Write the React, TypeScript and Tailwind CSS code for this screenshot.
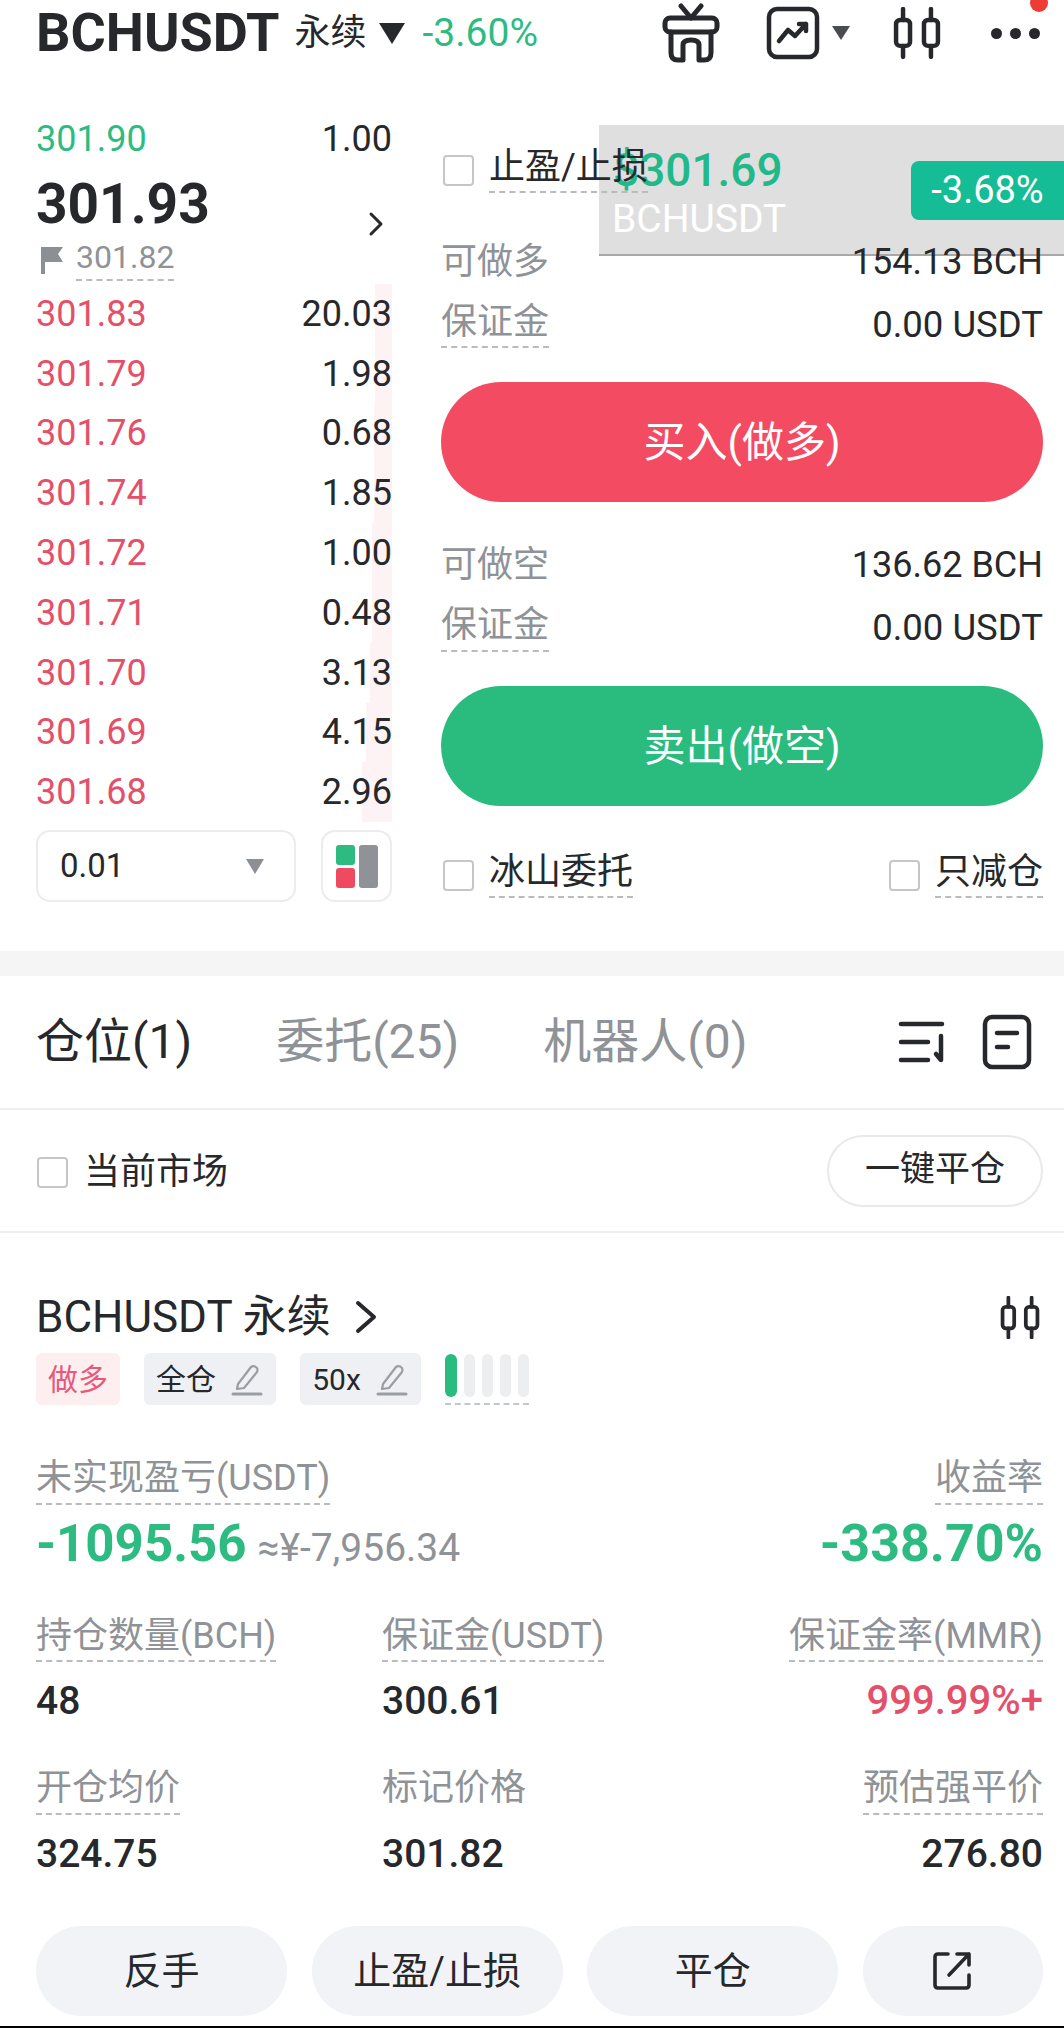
import React from "react";

const G = "text-[#2dbb82]";
const asks = [
  ["301.83", "20.03", 17],
  ["301.79", "1.98", 17],
  ["301.76", "0.68", 18],
  ["301.74", "1.85", 18],
  ["301.72", "1.00", 20],
  ["301.71", "0.48", 20],
  ["301.70", "3.13", 22],
  ["301.69", "4.15", 26],
  ["301.68", "2.96", 30],
] as const;

function Check() {
  return <span className="block w-[31px] h-[31px] rounded-[4px] border-2 border-[#c4c6c9] bg-white shrink-0" />;
}

function Dashed({ children, className = "" }: { children: React.ReactNode; className?: string }) {
  return <span className={"border-b-2 border-dashed border-[#b9bbbe] leading-[1.15] pb-[3px] " + className}>{children}</span>;
}

function Pen() {
  return (
    <svg width="34" height="34" viewBox="0 0 34 34" fill="none" stroke="#9a9da1" strokeWidth="2.2" strokeLinejoin="round" strokeLinecap="round">
      <path d="M8 22 L21 5 Q24 3 27 6 Q28 8 27 10 L14 26 L7 27 Z" />
      <path d="M3 32 H31" strokeWidth="3" />
    </svg>
  );
}

function Candle({ size = 48 }: { size?: number }) {
  return (
    <svg width={size} height={size * 1.08} viewBox="0 0 48 52" fill="none" stroke="#26282c" strokeWidth="4.5" strokeLinecap="round" strokeLinejoin="round">
      <rect x="3" y="13" width="14" height="26" rx="4" />
      <rect x="31" y="13" width="14" height="26" rx="4" />
      <path d="M10 2V13M10 39V50M38 2V13M38 39V50" />
    </svg>
  );
}

function Stat({ label, value, right = false, valueClass = "text-[#26282c]" }: { label: string; value: string; right?: boolean; valueClass?: string }) {
  return (
    <div className={"flex flex-col gap-[17px] " + (right ? "items-end" : "items-start")}>
      <Dashed className="text-[36px] text-[#8f9296]">{label}</Dashed>
      <span className={"leading-[44px] font-medium " + (right && value.includes("%") ? "text-[40px] " : "text-[39px] ") + valueClass}>{value}</span>
    </div>
  );
}

function Trade({ title, amount, color, btn, firstRow, secondRow }: { title: string; amount: string; color: string; btn: string; firstRow: string; secondRow: string }) {
  return (
    <div className="flex flex-col">
      <div className={"flex justify-between items-center " + firstRow}>
        <span className="text-[36px] text-[#8f9296]">{title}</span>
        <span className="text-[36px] text-[#26282c]">{amount}</span>
      </div>
      <div className={"flex justify-between items-center " + secondRow}>
        <Dashed className="text-[36px] text-[#8f9296]">保证金</Dashed>
        <span className="text-[36.5px] text-[#26282c]">0.00 USDT</span>
      </div>
      <div className={"mt-[26px] h-[120px] rounded-full flex items-center justify-center text-white text-[42px] font-normal " + color}>{btn}</div>
    </div>
  );
}

export default function App() {
  return (
    <div
      className="relative w-[1064px] h-[2028px] overflow-hidden bg-white flex flex-col text-[#26282c]"
      style={{ fontFamily: 'Roboto, "Noto Sans CJK SC", sans-serif' }}
    >
      {/* floating price ticker, painted under the order panel text */}
      <div className="absolute left-[599px] top-[125px] w-[465px] h-[131px] bg-[#dfdfdf] border-b-2 border-[#a8a8a8]">
        <span className="absolute left-[14px] top-[22px] text-[46px] font-medium leading-none text-[#22b98a]">$301.69</span>
        <span className="absolute left-[13px] top-[75px] text-[39px] leading-none text-white">BCHUSDT</span>
        <span className="absolute right-0 top-[36px] w-[153px] h-[59px] rounded-l-[8px] bg-[#14bd96] text-white text-[38px] flex items-center justify-center">-3.68%</span>
      </div>

      {/* header */}
      <header className="h-[66px] flex items-center pl-[36px] pr-[24px] shrink-0 relative">
        <span className="text-[54px] font-bold leading-none">BCHUSDT</span>
        <span className="ml-[15px] text-[36px] leading-none">永续</span>
        <svg className="ml-[12px]" width="26" height="24" viewBox="0 0 26 24"><path d="M0 2H26L13 23Z" fill="#26282c" /></svg>
        <span className={"ml-[18px] text-[39px] leading-none " + G}>-3.60%</span>
        <div className="ml-auto flex items-center">
          <svg width="58" height="60" viewBox="0 0 58 60" fill="none" stroke="#26282c" strokeWidth="5" strokeLinecap="round" strokeLinejoin="round">
            <rect x="3" y="15" width="52" height="14" rx="5" />
            <path d="M9 29V50Q9 57 16 57H21V42Q21 37 29 37Q37 37 37 42V57H42Q49 57 49 50V29" />
            <path d="M19 3L29 15L39 3" />
          </svg>
          <svg className="ml-[46px]" width="54" height="54" viewBox="0 0 54 54" fill="none" stroke="#26282c" strokeWidth="4.5" strokeLinecap="round" strokeLinejoin="round">
            <rect x="3" y="3" width="48" height="48" rx="8" />
            <path d="M13 35L22 24L29 30L40 18M33 18H40V25" />
          </svg>
          <svg className="ml-[12px]" width="18" height="16" viewBox="0 0 18 16"><path d="M0 1H18L9 15Z" fill="#4a4c50" /></svg>
          <div className="ml-[43px]"><Candle /></div>
          <div className="ml-[50px] flex gap-[8px] items-center">
            <span className="w-[11px] h-[11px] rounded-full bg-[#26282c]" />
            <span className="w-[11px] h-[11px] rounded-full bg-[#26282c]" />
            <span className="w-[11px] h-[11px] rounded-full bg-[#26282c]" />
          </div>
        </div>
        <span className="absolute right-[16px] top-[-6px] w-[18px] h-[18px] rounded-full bg-[#ee3b35]" />
      </header>

      {/* trading area */}
      <div className="relative flex pl-[36px] pr-[21px] pt-[43px] shrink-0">
        {/* order book */}
        <div className="w-[356px] flex flex-col">
          <div className="flex justify-between items-center h-[60px] text-[36px] leading-none">
            <span className={G}>301.90</span>
            <span>1.00</span>
          </div>
          <div className="flex justify-between h-[115px]">
            <div className="flex flex-col">
              <span className="text-[55px] font-bold leading-[70px]">301.93</span>
              <div className="flex items-center">
                <svg className="ml-[4px] mr-[12px]" width="24" height="28" viewBox="0 0 24 28"><path d="M1 1H23L18 8L23 16H5V28H1Z" fill="#8c8f93" /></svg>
                <Dashed className="text-[32px] text-[#8f9296]">301.82</Dashed>
              </div>
            </div>
            <svg className="mt-[42px] mr-[8px]" width="16" height="26" viewBox="0 0 16 26" fill="none" stroke="#26282c" strokeWidth="3" strokeLinecap="round" strokeLinejoin="round"><path d="M3 3L13 13L3 23" /></svg>
          </div>
          <div className="flex flex-col">
            {asks.map(([p, q, w]) => (
              <div key={p} className="relative flex justify-between items-center h-[59.8px] text-[36px] leading-none">
                <span className="absolute right-0 top-0 bottom-0 bg-[#fdf3f4]" style={{ width: w }} />
                <span className="relative text-[#e4506a]">{p}</span>
                <span className="relative">{q}</span>
              </div>
            ))}
          </div>
          <div className="flex justify-between mt-[8px]">
            <div className="w-[260px] h-[72px] rounded-[14px] border-2 border-[#ebecee] flex items-center justify-between pl-[22px] pr-[30px] text-[33px]">
              0.01
              <svg width="18" height="15" viewBox="0 0 18 15"><path d="M0 0H18L9 15Z" fill="#8c8f93" /></svg>
            </div>
            <div className="w-[71px] h-[72px] rounded-[14px] border-2 border-[#ebecee] flex items-center justify-center gap-[4px]">
              <div className="flex flex-col gap-[3px]">
                <span className="block w-[19px] h-[20px] rounded-[3px] bg-[#2dbb82]" />
                <span className="block w-[19px] h-[20px] rounded-[3px] bg-[#f04a60]" />
              </div>
              <span className="block w-[19px] h-[43px] rounded-[3px] bg-[#8f9296]" />
            </div>
          </div>
        </div>

        {/* order panel */}
        <div className="flex-1 ml-[49px] flex flex-col pt-[35px]">
          <div className="flex items-center gap-[15px] h-[52px] text-[36px] pl-[2px]">
            <Check />
            <Dashed>止盈/止损</Dashed>
          </div>
          <div className="mt-[34px]">
            <Trade title="可做多" amount="154.13 BCH" color="bg-[#f34c62]" btn="买入(做多)" firstRow="h-[64px]" secondRow="h-[62px]" />
          </div>
          <div className="mt-[31px]">
            <Trade title="可做空" amount="136.62 BCH" color="bg-[#2abb7f]" btn="卖出(做空)" firstRow="h-[64px]" secondRow="h-[63px]" />
          </div>
          <div className="mt-[46px] flex items-center justify-between text-[36px] pl-[2px]">
            <div className="flex items-center gap-[15px]"><Check /><Dashed>冰山委托</Dashed></div>
            <div className="flex items-center gap-[15px]"><Check /><Dashed>只减仓</Dashed></div>
          </div>
        </div>
      </div>

      <div className="h-[25px] bg-[#f5f5f6] mt-[49px] shrink-0" />

      {/* tabs */}
      <div className="h-[134px] flex items-center pl-[36px] pr-[32px] border-b-2 border-[#eeeff0] shrink-0">
        <span className="text-[48px] font-normal">仓位(1)</span>
        <span className="ml-[84px] text-[48px] font-normal text-[#8f9296]">委托(25)</span>
        <span className="ml-[84px] text-[48px] font-normal text-[#8f9296]">机器人(0)</span>
        <div className="ml-auto flex items-center gap-[32px]">
          <svg width="52" height="48" viewBox="0 0 52 48" fill="none" stroke="#26282c" strokeWidth="4.5" strokeLinecap="round" strokeLinejoin="round">
            <path d="M3 6H44M3 24H30M3 42H30M43 18V42L38 36" />
          </svg>
          <svg width="50" height="56" viewBox="0 0 50 56" fill="none" stroke="#26282c" strokeWidth="4.5" strokeLinecap="round" strokeLinejoin="round">
            <rect x="3" y="3" width="44" height="50" rx="7" />
            <path d="M15 19H35M15 33H26" />
          </svg>
        </div>
      </div>

      {/* current market */}
      <div className="h-[123px] flex items-center justify-between pl-[37px] pr-[21px] border-b-2 border-[#eeeff0] shrink-0">
        <div className="flex items-center gap-[16px] text-[36px] mt-[3px]">
          <Check />
          当前市场
        </div>
        <div className="w-[216px] h-[72px] rounded-full border-2 border-[#e8e9eb] flex items-center justify-center text-[35px]">一键平仓</div>
      </div>

      {/* position */}
      <div className="flex flex-col pl-[36px] pr-[21px] pt-[58px] flex-1">
        <div className="flex items-center justify-between h-[52px]">
          <div className="flex items-center">
            <span className="text-[44px]">BCHUSDT 永续</span>
            <svg className="ml-[24px]" width="22" height="34" viewBox="0 0 22 34" fill="none" stroke="#26282c" strokeWidth="4" strokeLinecap="round" strokeLinejoin="round"><path d="M3 3L19 17L3 31" /></svg>
          </div>
          <div className="mr-[3px]"><Candle size={40} /></div>
        </div>
        <div className="flex items-center mt-[10px] h-[52px]">
          <span className="w-[84px] h-[52px] rounded-[6px] bg-[#fdeef0] text-[#e8587a] text-[30px] flex items-center justify-center">做多</span>
          <span className="ml-[24px] w-[132px] h-[52px] rounded-[6px] bg-[#eef0f4] text-[30px] flex items-center justify-center gap-[14px]">全仓<Pen /></span>
          <span className="ml-[24px] w-[121px] h-[52px] rounded-[6px] bg-[#eef0f4] text-[30px] flex items-center justify-center gap-[14px]">50x<Pen /></span>
          <div className="ml-[24px] flex flex-col">
            <div className="flex gap-[7px]">
              <span className="block w-[12px] h-[43px] rounded-full bg-[#2abb7f]" />
              <span className="block w-[11px] h-[43px] rounded-full bg-[#eceef0]" />
              <span className="block w-[11px] h-[43px] rounded-full bg-[#eceef0]" />
              <span className="block w-[11px] h-[43px] rounded-full bg-[#eceef0]" />
              <span className="block w-[11px] h-[43px] rounded-full bg-[#eceef0]" />
            </div>
            <span className="block mt-[6px] border-b-2 border-dashed border-[#c4c6c9]" />
          </div>
        </div>

        <div className="flex justify-between mt-[53px]">
          <div className="flex flex-col items-start">
            <Dashed className="text-[36px] text-[#8f9296]">未实现盈亏(USDT)</Dashed>
            <div className="flex items-baseline mt-[8px]">
              <span className={"text-[51px] font-bold leading-[62px] " + G}>-1095.56</span>
              <span className="ml-[11px] text-[39px] text-[#8f9296]">≈¥-7,956.34</span>
            </div>
          </div>
          <div className="flex flex-col items-end">
            <Dashed className="text-[36px] text-[#8f9296]">收益率</Dashed>
            <span className={"text-[52px] font-bold leading-[62px] mt-[8px] " + G}>-338.70%</span>
          </div>
        </div>

        <div className="grid grid-cols-[346px_1fr_auto] gap-y-[45px] mt-[39px]">
          <Stat label="持仓数量(BCH)" value="48" />
          <Stat label="保证金(USDT)" value="300.61" />
          <Stat label="保证金率(MMR)" value="999.99%+" right valueClass="text-[#e4506a]" />
          <Stat label="开仓均价" value="324.75" />
          <div className="flex flex-col gap-[17px] items-start">
            <span className="text-[36px] text-[#8f9296] leading-[1.15] pb-[5px]">标记价格</span>
            <span className="text-[39px] leading-[44px] font-medium">301.82</span>
          </div>
          <Stat label="预估强平价" value="276.80" right />
        </div>

        <div className="flex justify-between mt-auto mb-[10px]">
          {["反手", "止盈/止损", "平仓"].map((t) => (
            <div key={t} className="w-[251px] h-[90px] rounded-[45px] bg-[#f1f3f6] flex items-center justify-center text-[38px]">{t}</div>
          ))}
          <div className="w-[180px] h-[90px] rounded-[45px] bg-[#f1f3f6] flex items-center justify-center">
            <svg width="40" height="40" viewBox="0 0 40 40" fill="none" stroke="#26282c" strokeWidth="3.6" strokeLinecap="round" strokeLinejoin="round">
              <path d="M15 3H5Q2 3 2 6V34Q2 37 5 37H33Q36 37 36 34V24M16 24L36 3M24 3H36V14" />
            </svg>
          </div>
        </div>
      </div>

      <div className="h-[2px] bg-black shrink-0" />
    </div>
  );
}
